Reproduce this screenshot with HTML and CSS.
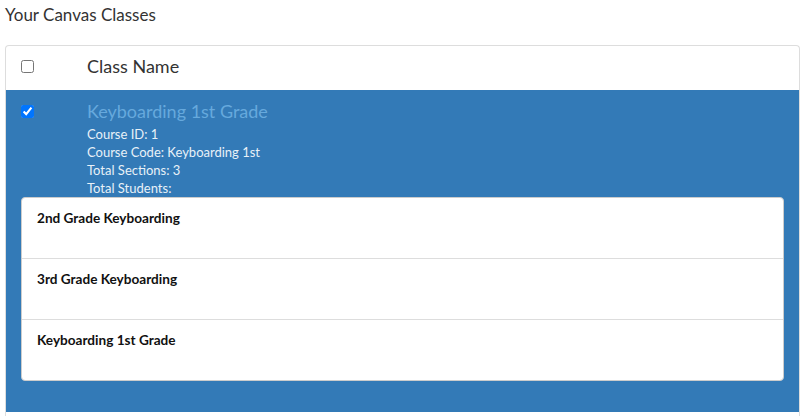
FILE: index.html
```html
<!DOCTYPE html>
<html lang="en">

<head>
    <meta charset="UTF-8">
    <meta name="viewport" content="width=device-width, initial-scale=1.0">
    <title>Your Canvas Classes</title>
    <link rel="stylesheet" href="styles.css">
</head>

<body>
    <h1 class="page-title">Your Canvas Classes</h1>

    <div class="class-panel">
        <div class="class-row header-row">
            <div class="check-cell"><input type="checkbox"></div>
            <div class="name-cell">Class Name</div>
        </div>

        <div class="class-row selected">
            <div class="course-info">
                <div class="check-cell"><input type="checkbox" checked></div>
                <div class="name-cell">
                    <div class="course-title">Keyboarding 1st Grade</div>
                    <div class="course-meta">Course ID: 1</div>
                    <div class="course-meta">Course Code: Keyboarding 1st</div>
                    <div class="course-meta">Total Sections: 3</div>
                    <div class="course-meta">Total Students:</div>
                </div>
            </div>

            <ul class="section-list">
                <li class="section-item">2nd Grade Keyboarding</li>
                <li class="section-item">3rd Grade Keyboarding</li>
                <li class="section-item">Keyboarding 1st Grade</li>
            </ul>
        </div>
    </div>
</body>

</html>
```

FILE: styles.css
```css
body {
    font-family: Lato, 'Open Sans', sans-serif;
    margin: 0;
    padding: 0 9px 0 5px;
    color: #333;
    background-color: white;
}

.page-title {
    font-size: 17px;
    font-weight: normal;
    margin: 0;
    padding-top: 5px;
    line-height: 20px;
    color: #333;
}

.class-panel {
    margin-top: 20px;
    border: 1px solid #ddd;
    border-radius: 4px 4px 0 0;
    border-bottom: none;
    height: 370px;
    overflow: hidden;
}

.class-row {
    display: flex;
}

.check-cell {
    width: 66px;
    padding-left: 15px;
    flex-shrink: 0;
}

.check-cell input {
    margin: 0;
    width: 13px;
    height: 13px;
}

.header-row {
    height: 44px;
    box-sizing: border-box;
    padding-bottom: 4px;
    align-items: center;
    font-size: 18px;
}

.header-row .check-cell input {
    margin-top: 4px;
}

.selected {
    flex-direction: column;
    background-color: #337ab7;
    padding: 9px 15px 31px 0;
}

.course-info {
    display: flex;
}

.selected .check-cell input {
    margin-top: 6px;
}

.course-title {
    font-size: 18px;
    line-height: 24px;
    color: #66a9dd;
    margin-bottom: 2px;
}

.course-meta {
    font-size: 13px;
    line-height: 18px;
    color: #e8f1f8;
}

.section-list {
    list-style: none;
    margin: 0 0 0 15px;
    padding: 0;
    background-color: white;
    border-radius: 4px;
    border: 1px solid #ccc;
}

.section-item {
    height: 61px;
    box-sizing: border-box;
    padding: 11px 15px;
    font-size: 13.6px;
    line-height: 18px;
    font-weight: bold;
    color: #111;
    border-bottom: 1px solid #ddd;
}

.section-item:last-child {
    border-bottom: none;
    height: 60px;
}
```
